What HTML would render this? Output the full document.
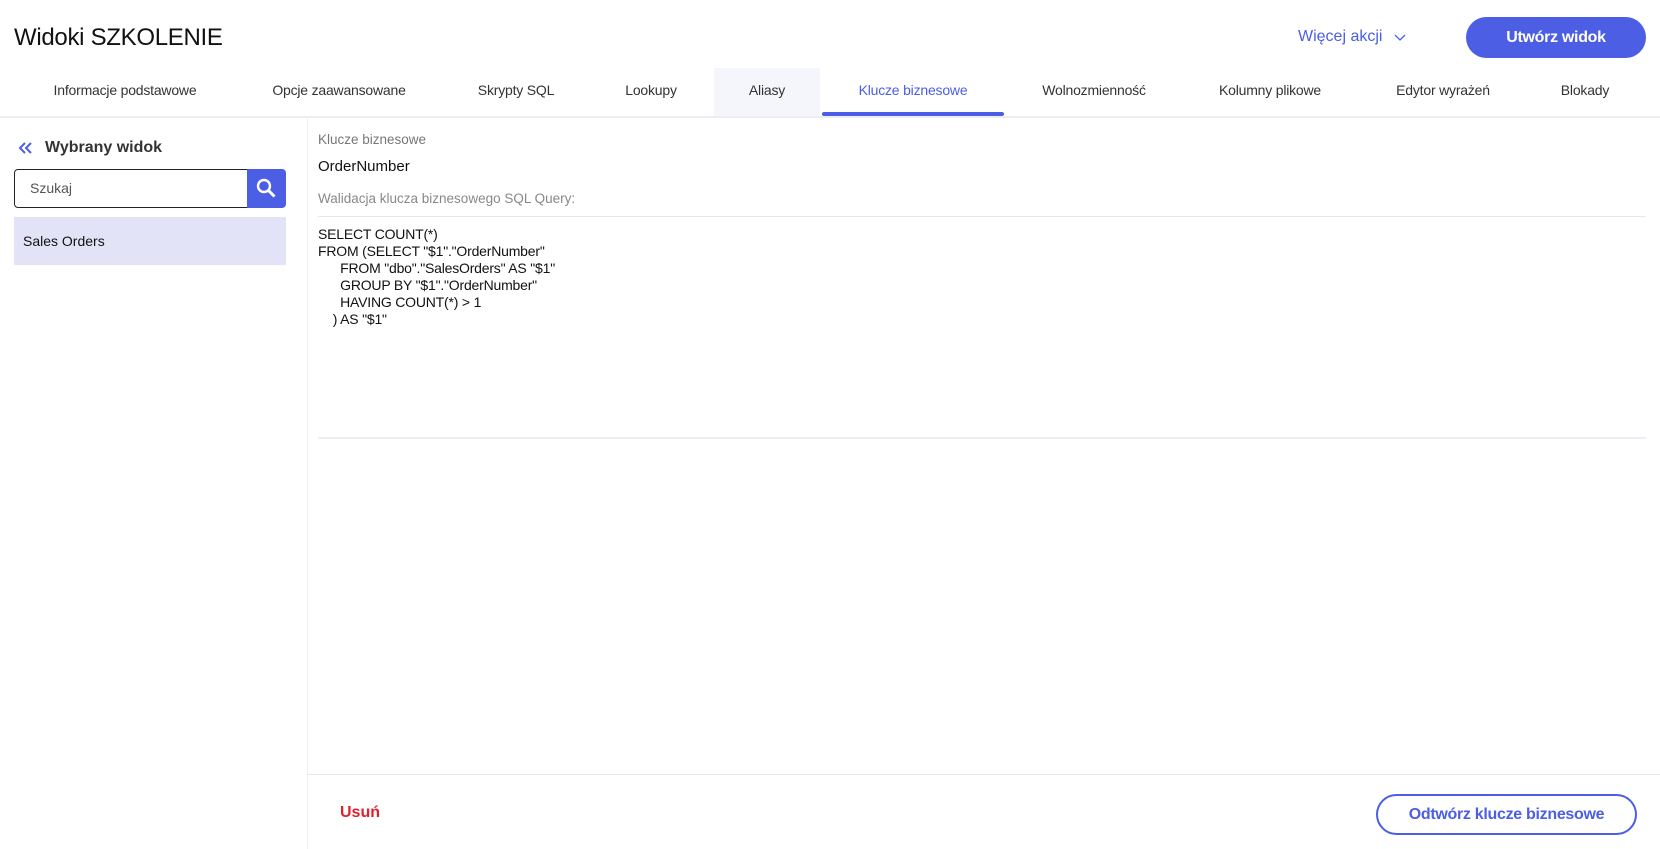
<!DOCTYPE html>
<html><head><meta charset="utf-8"><style>
*{box-sizing:border-box;margin:0;padding:0}
body{width:1660px;height:849px;background:#fff;font-family:"Liberation Sans",sans-serif;color:#222;position:relative;overflow:hidden}
.a{position:absolute;white-space:nowrap}
.tab{position:absolute;top:82px;font-size:14px;color:#333;transform:translateX(-50%);letter-spacing:-0.2px}
</style></head><body>
<div class="a" style="left:14px;top:24px;font-size:24px;color:#111;letter-spacing:-0.3px">Widoki SZKOLENIE</div>
<div class="a" style="left:1298px;top:28px;font-size:16px;color:#4b5ee4">Więcej akcji</div>
<svg class="a" style="left:1394px;top:34px" width="12" height="8" viewBox="0 0 12 8"><path d="M1 1l5 5 5-5" fill="none" stroke="#4b5ee4" stroke-width="1.3"/></svg>
<div class="a" style="left:1466px;top:17px;width:180px;height:41px;border-radius:21px;background:#4b5ee4;color:#fff;font-weight:bold;font-size:16px;text-align:center;line-height:41px;letter-spacing:-0.3px">Utwórz widok</div>

<div class="a" style="left:714px;top:68px;width:106px;height:48px;background:#f5f6fb"></div>
<div class="a" style="left:0;top:116px;width:1660px;height:2px;background:#ededf8"></div>
<div class="a" style="left:822px;top:112px;width:182px;height:4px;border-radius:2px;background:#4b5ee4"></div>
<div class="tab" style="left:125px">Informacje podstawowe</div>
<div class="tab" style="left:339px">Opcje zaawansowane</div>
<div class="tab" style="left:516px">Skrypty SQL</div>
<div class="tab" style="left:651px">Lookupy</div>
<div class="tab" style="left:767px">Aliasy</div>
<div class="tab" style="left:913px;color:#4b5ee4">Klucze biznesowe</div>
<div class="tab" style="left:1094px">Wolnozmienność</div>
<div class="tab" style="left:1270px">Kolumny plikowe</div>
<div class="tab" style="left:1443px">Edytor wyrażeń</div>
<div class="tab" style="left:1585px">Blokady</div>

<div class="a" style="left:307px;top:118px;width:1px;height:731px;background:#eeeef5"></div>
<svg class="a" style="left:17px;top:141px" width="17" height="14" viewBox="0 0 17 14"><path d="M8 2L3 7l5 5M14 2L9 7l5 5" fill="none" stroke="#4b5ee4" stroke-width="2"/></svg>
<div class="a" style="left:45px;top:139px;font-size:16px;font-weight:bold;color:#333">Wybrany widok</div>
<div class="a" style="left:14px;top:169px;width:234px;height:39px;border:1.5px solid #222;border-radius:4px 0 0 4px"></div>
<div class="a" style="left:30px;top:180px;font-size:14px;color:#555">Szukaj</div>
<div class="a" style="left:247px;top:169px;width:39px;height:39px;background:#4b5ee4;border-radius:0 4px 4px 0"></div>
<svg class="a" style="left:256px;top:178px" width="21" height="21" viewBox="0 0 21 21"><circle cx="8" cy="8" r="6" fill="none" stroke="#fff" stroke-width="2.4"/><path d="M12.5 12.5l6 6" stroke="#fff" stroke-width="3"/></svg>
<div class="a" style="left:14px;top:217px;width:272px;height:48px;background:#e3e3f7"></div>
<div class="a" style="left:23px;top:233px;font-size:14px;color:#111">Sales Orders</div>

<div class="a" style="left:318px;top:132px;font-size:13.5px;color:#777">Klucze biznesowe</div>
<div class="a" style="left:318px;top:158px;font-size:15px;color:#111">OrderNumber</div>
<div class="a" style="left:318px;top:191px;font-size:13.5px;color:#888">Walidacja klucza biznesowego SQL Query:</div>
<div class="a" style="left:318px;top:216px;width:1328px;height:1px;background:#e6e6f2"></div>
<div class="a" style="left:318px;top:226px;font-size:14px;line-height:17px;color:#111;white-space:pre;letter-spacing:-0.2px">SELECT COUNT(*)
FROM (SELECT "$1"."OrderNumber"
      FROM "dbo"."SalesOrders" AS "$1"
      GROUP BY "$1"."OrderNumber"
      HAVING COUNT(*) &gt; 1
    ) AS "$1"</div>
<div class="a" style="left:318px;top:437px;width:1328px;height:2px;background:#ededf8"></div>
<div class="a" style="left:307px;top:774px;width:1353px;height:1px;background:#e6e6f2"></div>
<div class="a" style="left:340px;top:804px;font-size:16px;font-weight:bold;color:#e0202f">Usuń</div>
<div class="a" style="left:1376px;top:794px;width:261px;height:41px;border:2px solid #4b5ee4;border-radius:21px;color:#4b5ee4;font-weight:bold;font-size:16px;text-align:center;line-height:37px;letter-spacing:-0.3px">Odtwórz klucze biznesowe</div>
</body></html>
